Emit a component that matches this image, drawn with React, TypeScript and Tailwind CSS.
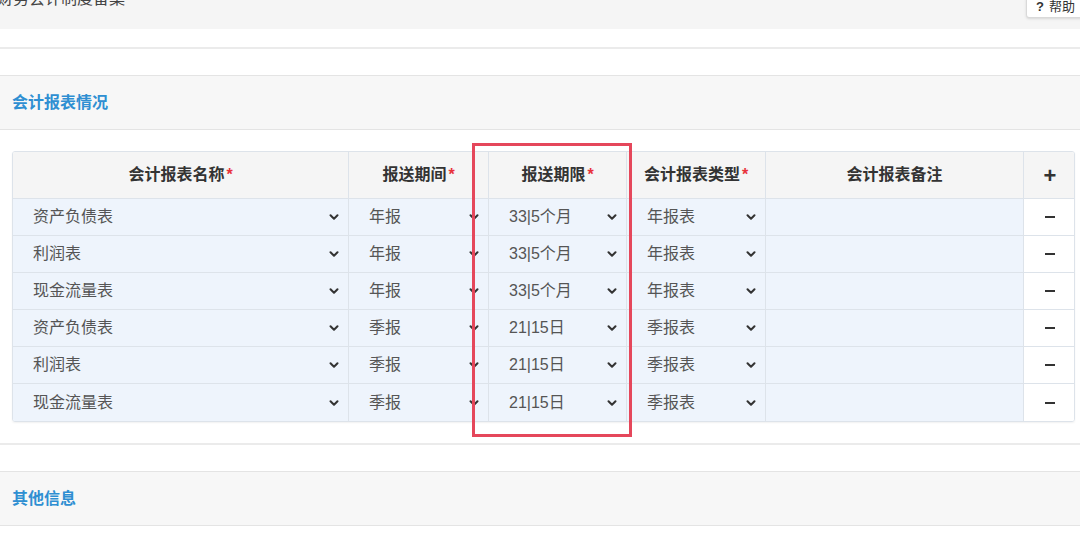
import { ChevronDown } from "lucide-react";

const rows = [
  { name: "资产负债表", period: "年报", limit: "33|5个月", type: "年报表" },
  { name: "利润表", period: "年报", limit: "33|5个月", type: "年报表" },
  { name: "现金流量表", period: "年报", limit: "33|5个月", type: "年报表" },
  { name: "资产负债表", period: "季报", limit: "21|15日", type: "季报表" },
  { name: "利润表", period: "季报", limit: "21|15日", type: "季报表" },
  { name: "现金流量表", period: "季报", limit: "21|15日", type: "季报表" },
];

const font = { fontFamily: '"Liberation Sans", "Noto Sans CJK SC", sans-serif' };

function Req() {
  return <span className="text-[#e8323c] ml-[2px]">*</span>;
}

function SelectCell({ value }: { value: string }) {
  return (
    <div className="flex items-center justify-between pl-[20px] pr-[7px] bg-[#eef4fc] border-r border-[#dde3ea]">
      <span className="text-[16px] text-[#555]">{value}</span>
      <ChevronDown className="w-[14px] h-[14px] text-[#333]" strokeWidth={3.5} />
    </div>
  );
}

function SectionHeader({ title }: { title: string }) {
  return (
    <div className="h-[55px] bg-[#f7f7f7] border-y border-[#e4e4e4] flex items-center px-[12px]">
      <span className="text-[16px] font-bold text-[#2f8fd2]">{title}</span>
    </div>
  );
}

export default function App() {
  return (
    <div className="min-h-screen bg-white text-[#333] overflow-hidden" style={font}>
      <div className="h-[29px] bg-[#f5f5f5] flex items-start justify-between overflow-hidden">
        <span className="text-[16px] text-[#444] -mt-[11px] -ml-[3px] leading-[20px]">财务会计制度备案</span>
        <div className="-mt-[4px] -mr-[4px] h-[22px] pl-[9px] pr-[8px] flex items-center gap-[5px] bg-white border border-[#d9d9d9] rounded-[3px] shadow-sm text-[13px] text-[#333]">
          <span className="font-bold">?</span>
          <span>帮助</span>
        </div>
      </div>
      <div className="h-[18px]" />
      <div className="h-[28px] border-t-2 border-[#ebebeb]" />
      <SectionHeader title="会计报表情况" />

      <div className="pt-[21px] pb-[21px] pl-[12px] pr-[5px]">
        <div className="relative w-[1063px]">
          <div className="border border-[#dde3ea] rounded-[3px] shadow-[0_1px_2px_rgba(0,0,0,0.06)] overflow-hidden">
            <div className="grid grid-cols-[336px_140px_138px_139px_258px_52px] h-[47px] bg-[#f5f5f5] border-b border-[#dde3ea] text-[16px] font-bold text-[#333]">
              <div className="flex items-center justify-center border-r border-[#dde3ea]">会计报表名称<Req /></div>
              <div className="flex items-center justify-center border-r border-[#dde3ea]">报送期间<Req /></div>
              <div className="flex items-center justify-center border-r border-[#dde3ea]">报送期限<Req /></div>
              <div className="flex items-center justify-center border-r border-[#dde3ea]">会计报表类型<Req /></div>
              <div className="flex items-center justify-center border-r border-[#dde3ea]">会计报表备注</div>
              <div className="flex items-center justify-center text-[22px] font-bold text-[#333]">+</div>
            </div>
            {rows.map((r, i) => (
              <div
                key={i}
                className={`grid grid-cols-[336px_140px_138px_139px_258px_52px] h-[37px] ${i < rows.length - 1 ? "border-b border-[#dde3ea]" : ""}`}
              >
                <SelectCell value={r.name} />
                <SelectCell value={r.period} />
                <SelectCell value={r.limit} />
                <SelectCell value={r.type} />
                <div className="bg-[#eef4fc] border-r border-[#dde3ea]" />
                <div className="flex items-center justify-center bg-white">
                  <span className="block w-[10px] h-[2px] bg-[#333]" />
                </div>
              </div>
            ))}
          </div>
          <div className="absolute left-[460px] -top-[8px] w-[160px] h-[294px] border-[3px] border-[#e5475b] pointer-events-none" />
        </div>
      </div>

      <div className="h-[28px] border-t-2 border-[#ebebeb]" />
      <SectionHeader title="其他信息" />
    </div>
  );
}
